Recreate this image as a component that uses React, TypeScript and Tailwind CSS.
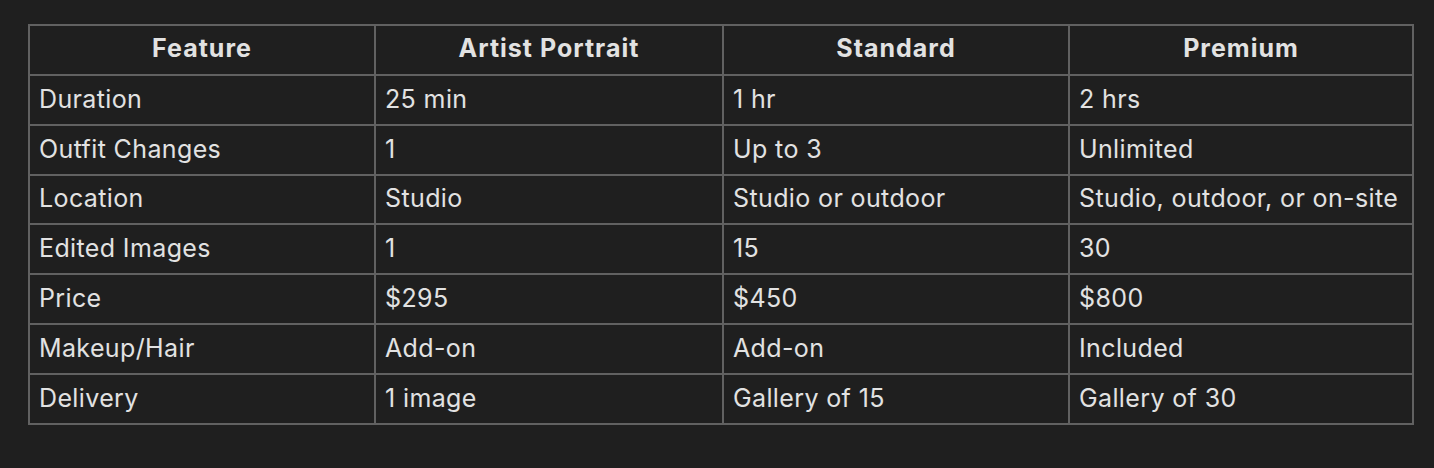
import React from 'react';

const headers = ['Feature', 'Artist Portrait', 'Standard', 'Premium'];

const rows = [
  ['Duration', '25 min', '1 hr', '2 hrs'],
  ['Outfit Changes', '1', 'Up to 3', 'Unlimited'],
  ['Location', 'Studio', 'Studio or outdoor', 'Studio, outdoor, or on-site'],
  ['Edited Images', '1', '15', '30'],
  ['Price', '$295', '$450', '$800'],
  ['Makeup/Hair', 'Add-on', 'Add-on', 'Included'],
  ['Delivery', '1 image', 'Gallery of 15', 'Gallery of 30'],
];

export default function App() {
  return (
    <div
      className="min-h-[468px] bg-[#1f1f1f] pl-[28px] pt-[24px] text-[#e2e2e2]"
      style={{ fontFamily: 'Inter, "Noto Sans", sans-serif' }}
    >
      <table className="w-[1384px] table-fixed border-collapse text-[25px] leading-none">
        <colgroup>
          <col className="w-[346px]" />
          <col className="w-[348px]" />
          <col className="w-[346px]" />
          <col className="w-[344px]" />
        </colgroup>
        <thead>
          <tr className="h-[49.85px]">
            {headers.map((h) => (
              <th
                key={h}
                className="border-2 border-[#616161] px-[9px] pb-[3px] text-center font-bold tracking-[0.04em]"
              >
                {h}
              </th>
            ))}
          </tr>
        </thead>
        <tbody>
          {rows.map((row) => (
            <tr key={row[0]} className="h-[49.85px]">
              {row.map((cell, i) => (
                <td
                  key={i}
                  className="border-2 border-[#616161] px-[9px] pb-[1px] text-left tracking-[0.015em]"
                >
                  {cell}
                </td>
              ))}
            </tr>
          ))}
        </tbody>
      </table>
    </div>
  );
}
